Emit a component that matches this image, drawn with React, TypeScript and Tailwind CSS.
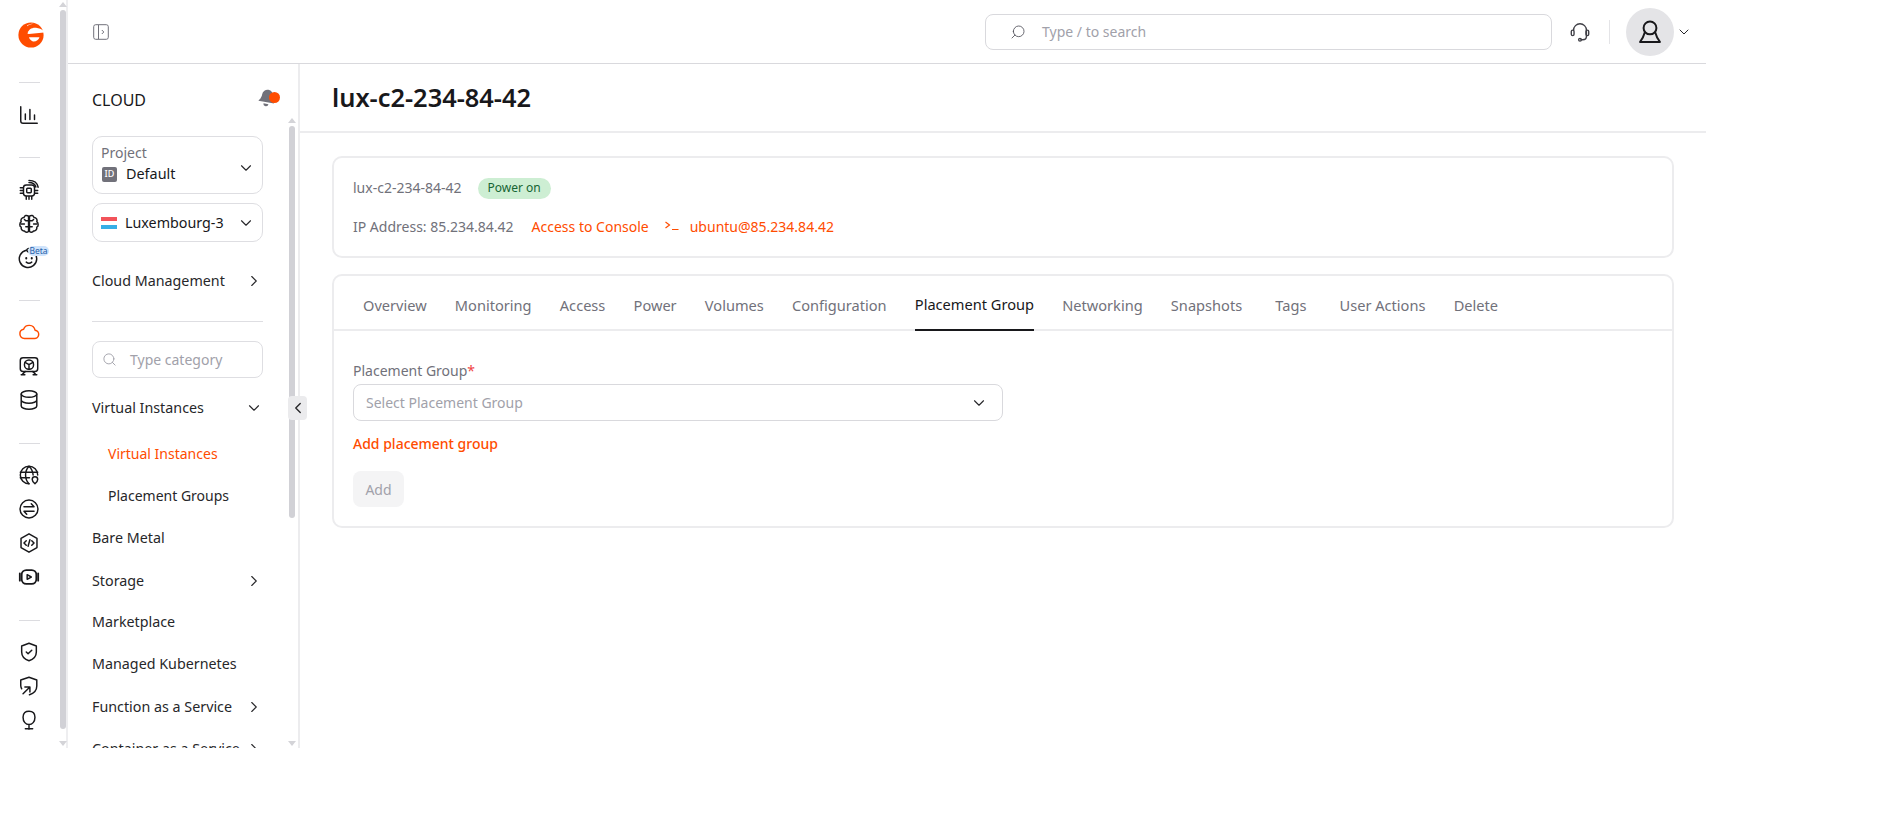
import React from 'react';
import { ChevronDown, ChevronRight, ChevronLeft, Search } from 'lucide-react';

const font = 'font-["Noto_Sans",sans-serif]';

function Ic({ children, className = 'text-[#18181b]' }: { children: React.ReactNode; className?: string }) {
  return (
    <svg viewBox="0 0 24 24" fill="none" stroke="currentColor" strokeWidth="1.6" strokeLinecap="round" strokeLinejoin="round" className={'w-[22px] h-[22px] ' + className}>
      {children}
    </svg>
  );
}

function Logo() {
  return (
    <svg viewBox="0 0 26 28" className="w-[26px] h-[28px]">
      <circle cx="13" cy="14" r="12.600" fill="#ff4c00" />
      <path d="M9.500 12.800C10 8.500 14 6.400 18 6.800c3 .3 6 1.700 8.500 3.700v1L11 13z" fill="#fff" />
      <path d="M11 16.200h10.500c-.8 2.800-3.500 4.500-6.500 4.200-2-.6-3.500-2.200-4-4.200z" fill="#fff" />
      <path d="M9 4.500c2-1.400 4.500-2 7-1.800-2.600.2-5 1-7 2.600z" fill="#fff" />
    </svg>
  );
}

function RailDivider({ className }: { className: string }) {
  return <div className={'w-[21px] h-px bg-[#dcdce0] ' + className} />;
}

function RailIcon({ children }: { children: React.ReactNode }) {
  return <div className="h-[34px] w-[56px] flex items-center justify-center">{children}</div>;
}

function Rail() {
  return (
    <div className="w-[68px] shrink-0 flex border-r-2 border-[#eeeef0]">
      <div className="w-[58px] shrink-0 flex flex-col items-center pt-[21px]">
        <div className="pl-[3px]"><Logo /></div>
        <RailDivider className="mt-[33px]" />
        <div className="mt-[15px]">
          <RailIcon>
            <Ic>
              <path d="M3 3v15.500c0 1.400 1 2.500 2.500 2.500H21" />
              <path d="M8 11v6M13 6v11M18 12v5" />
            </Ic>
          </RailIcon>
        </div>
        <RailDivider className="mt-[25px]" />
        <div className="mt-[15px]">
          <RailIcon>
            <Ic>
              <rect x="6" y="6.500" width="12" height="12" rx="3" />
              <rect x="9.500" y="10" width="5" height="5" rx="1" />
              <path d="M2.500 9.500h3M2.500 12.500h3M2.500 15.500h3M9 22v-3M12 22v-3M15 22v-3M18.500 12.500h3M18.500 15.500h3M12 3.800c3.500 0 6.500 1.700 7.500 5M12 1.500c5 0 9 2.500 10 7.500" />
            </Ic>
          </RailIcon>
          <RailIcon>
            <Ic>
              <path d="M11.500 3.500C9.500 2 7 2.500 6.500 5 4 5 2.500 7.500 3.500 9.500c-2 1.500-2 5 0 6-.5 2.500 1.500 4.500 3.500 4 1 2 4 2 4.500.5z" />
              <path d="M12.500 3.500C14.500 2 17 2.500 17.500 5c2.500 0 4 2.500 3 4.500 2 1.500 2 5 0 6 .5 2.500-1.500 4.500-3.500 4-1 2-4 2-4.500.5z" />
              <path d="M11.500 8.500H8.500L7 7M11.500 15H8.500M3.500 12H7M12.500 8.500h3L17 7M12.500 15h3M20.500 12H17" />
            </Ic>
          </RailIcon>
          <RailIcon>
            <div className="relative">
              <Ic>
                <path d="M17 5.500A9.500 9.500 0 1 1 9 3.500" />
                <path d="M11.500 1.500C9.500 2 9 4 10.500 5c1.500.8 3 0 2.500-1.500" />
                <path d="M9 12v.5M15 12v.5" strokeWidth="2.200" />
                <path d="M9 16.500c1.800 1.400 4.200 1.400 6 0" />
              </Ic>
              <span className="absolute left-[10px] top-[-1px] w-[21px] h-[10px] rounded-[5px] bg-[#cfe3fb] text-[8.500px] leading-[10px] text-center text-[#1f5fa8]">Beta</span>
            </div>
          </RailIcon>
        </div>
        <RailDivider className="mt-[25px]" />
        <div className="mt-[14px]">
          <RailIcon>
            <Ic className="text-[#ff4c00]">
              <path d="M17.500 19H7a5 5 0 0 1-.9-9.900 6.500 6.500 0 0 1 12.500 0.900 4.500 4.500 0 0 1-1.100 9z" />
            </Ic>
          </RailIcon>
          <RailIcon>
            <Ic>
              <rect x="2.500" y="3" width="19" height="15" rx="3" />
              <circle cx="12" cy="10.500" r="5" />
              <path d="M12 10.500v5M12 10.500 7.700 8M12 10.500 16.300 8M5 21c1-1.500 2-2.500 3-3M19 21c-1-1.500-2-2.500-3-3M3.500 21.500h4M16.500 21.500h4" />
            </Ic>
          </RailIcon>
          <RailIcon>
            <Ic>
              <ellipse cx="12" cy="5.500" rx="8.500" ry="3.500" />
              <path d="M3.500 5.500v13c0 1.900 3.800 3.500 8.500 3.500s8.500-1.600 8.500-3.500v-13M3.500 12c0 1.900 3.800 3.500 8.500 3.500s8.500-1.600 8.500-3.500" />
            </Ic>
          </RailIcon>
        </div>
        <RailDivider className="mt-[26px]" />
        <div className="mt-[14px]">
          <RailIcon>
            <Ic>
              <path d="M21.500 12a9.500 9.500 0 1 0-9.500 9.500" />
              <path d="M2.500 9h19M2.500 15h10M12 2.500c-5 5-5 14 0 19M12 2.500c3 3 4.300 6.500 4.500 9.500" />
              <path d="M18.500 21.500s-3-2.400-3-4.500a3 3 0 0 1 6 0c0 2.100-3 4.500-3 4.500z" />
            </Ic>
          </RailIcon>
          <RailIcon>
            <Ic>
              <circle cx="12" cy="12" r="9.800" />
              <path d="M6.500 9.500h11M14.500 6.200l3 3.300M17.500 14.500h-11M9.500 17.800l-3-3.300" />
            </Ic>
          </RailIcon>
          <RailIcon>
            <Ic>
              <path d="M12 2 20.700 7v10L12 22l-8.700-5V7z" />
              <path d="M9 9.500 6.500 12 9 14.500M15 9.500l2.500 2.500-2.500 2.500M13 8.500l-2 7" />
            </Ic>
          </RailIcon>
          <RailIcon>
            <Ic>
              <rect x="4" y="4.500" width="16" height="15" rx="5" strokeWidth="2" />
              <path d="M2 8v8M22 8v8" strokeWidth="2" />
              <path d="M10 9.500v5l4.500-2.500z" />
            </Ic>
          </RailIcon>
        </div>
        <RailDivider className="mt-[26px]" />
        <div className="mt-[14px]">
          <RailIcon>
            <Ic>
              <path d="M12 2.500 20 5.500v6.500c0 4.500-3.300 8-8 9.500-4.700-1.500-8-5-8-9.500V5.500z" />
              <path d="M9 12l2 2 4-4" />
            </Ic>
          </RailIcon>
          <RailIcon>
            <Ic>
              <path d="M4 15c-.6-1-1-2.300-1-3.500V5.500L12 2.500l8.500 3v6.500c0 4.500-3.300 8-8 9.500" />
              <path d="M5.500 20.500 13 13M7.500 13H13v5.500" />
            </Ic>
          </RailIcon>
          <RailIcon>
            <Ic>
              <path d="M12 2.500c3.700 0 6.500 1.500 6.500 6.500s-3 8-6.500 8-6.500-3-6.500-8 2.800-6.500 6.500-6.500zM12 17v5M8 21.500h8" />
            </Ic>
          </RailIcon>
        </div>
      </div>
      <ScrollBar thumbTop="mt-[3px]" thumbH="h-[719px]" className="w-[9px] h-[748px] pt-[2px]" />
    </div>
  );
}

function ScrollBar({ thumbTop, thumbH, className }: { thumbTop: string; thumbH: string; className: string }) {
  return (
    <div className={'shrink-0 flex flex-col items-center ' + className}>
      <div className="w-0 h-0 border-x-[4px] border-x-transparent border-b-[5px] border-b-[#d4d4d8]" />
      <div className={'w-[6px] rounded-full bg-[#d1d1d6] ' + thumbTop + ' ' + thumbH} />
      <div className="flex-1" />
      <div className="w-0 h-0 border-x-[4px] border-x-transparent border-t-[5px] border-t-[#d4d4d8] mb-[2px]" />
    </div>
  );
}

function Header() {
  return (
    <div className="h-[64px] shrink-0 border-b border-[#d9d9dd] flex items-center pl-[25px]">
      <svg viewBox="0 0 16 16" fill="none" stroke="#71717a" strokeWidth="1" className="w-[16px] h-[16px]">
        <rect x="0.700" y="0.700" width="14.600" height="14.600" rx="2" />
        <path d="M5.500 1v14M8.800 6l2 2-2 2" />
      </svg>
      <div className="ml-auto w-[567px] h-[36px] border border-[#d9d9dd] rounded-[8px] flex items-center pl-[24px] mr-[17px]">
        <Search className="w-[16px] h-[16px] text-[#52525b] -scale-x-100" strokeWidth={1.300} />
        <span className="ml-[16px] text-[14px] text-[#a1a1aa]">Type / to search</span>
      </div>
      <svg viewBox="0 0 24 24" fill="none" stroke="#3f3f46" strokeWidth="1.500" strokeLinecap="round" className="w-[22px] h-[22px]">
        <path d="M5 10a7 7 0 0 1 14 0v7c0 2-1.500 3.500-4 3.500h-2" />
        <rect x="2.500" y="10" width="3" height="6" rx="1.500" />
        <rect x="18.500" y="10" width="3" height="6" rx="1.500" />
        <circle cx="12" cy="20.500" r="1.500" />
      </svg>
      <div className="w-px h-[24px] bg-[#e4e4e7] ml-[18px] mr-[16px]" />
      <div className="w-[48px] h-[48px] rounded-full bg-[#e4e4e7] flex items-center justify-center">
        <svg viewBox="0 0 24 24" fill="none" stroke="#18181b" strokeWidth="1.700" strokeLinecap="round" strokeLinejoin="round" className="w-[28px] h-[28px]">
          <circle cx="12" cy="8.500" r="5.500" />
          <path d="M7.500 12.500C6.500 16 5.300 18.500 3.500 20.500h17c-1.800-2-3-4.500-4-8" />
        </svg>
      </div>
      <ChevronDown className="w-[16px] h-[16px] text-[#27272a] ml-[2px] mr-[14px]" strokeWidth={1.500} />
    </div>
  );
}

function NavRow({ label, icon, sub, active, nudge }: { label: string; icon?: 'right' | 'down'; sub?: boolean; active?: boolean; nudge?: boolean }) {
  return (
    <div className={'h-[42px] flex items-center justify-between ' + (nudge ? 'pt-[2px] ' : '') + (sub ? 'pl-[16px] text-[14px] ' : 'text-[14.300px] ') + (active ? 'text-[#ff4c00]' : 'text-[#27272a]')}>
      <span className="whitespace-nowrap">{label}</span>
      {icon === 'right' && <ChevronRight className="w-[18px] h-[18px] text-[#27272a]" strokeWidth={1.500} />}
      {icon === 'down' && <ChevronDown className="w-[18px] h-[18px] text-[#27272a]" strokeWidth={1.500} />}
    </div>
  );
}

function Sidebar() {
  return (
    <div className="relative w-[232px] shrink-0 border-r-2 border-[#ececee] flex flex-col h-[684px] overflow-visible">
      <div className="flex items-center justify-between h-[54px] pl-[24px] pr-[21px] pt-[18px]">
        <span className="text-[16px] text-[#18181b]">CLOUD</span>
        <div className="relative w-[20px] h-[20px] -mt-[4px]">
          <svg viewBox="0 0 24 24" className="w-[20px] h-[20px] rotate-[10deg]" fill="#71717a">
            <path d="M12 2a6.500 6.500 0 0 0-6.500 6.500c0 5-2.500 7-3 8.500h19c-.5-1.500-3-3.500-3-8.500A6.500 6.500 0 0 0 12 2zM9 19a3 3 0 0 0 6 0z" />
          </svg>
          <div className="absolute right-[-3px] top-[4px] w-[11px] h-[11px] rounded-full bg-[#ff4c00]" />
        </div>
      </div>
      <div className="flex flex-1 min-h-0">
        <div className="w-[219px] shrink-0 overflow-hidden pl-[24px] pt-[18px]">
          <div className="w-[171px]">
            <div className="h-[58px] border border-[#dedee2] rounded-[10px] pl-[8px] pr-[7px] pt-[7px] relative">
              <div className="text-[14px] leading-[18px] text-[#71717a]">Project</div>
              <div className="flex items-center mt-[4px] pl-[1px]">
                <span className="w-[15px] h-[15px] rounded-[2px] bg-[#71717a] text-white text-[9px] font-medium flex items-center justify-center">ID</span>
                <span className="ml-[9px] text-[14.400px] leading-[16px] text-[#18181b]">Default</span>
              </div>
              <ChevronDown className="absolute right-[7px] top-[22px] w-[18px] h-[18px] text-[#27272a]" strokeWidth={1.500} />
            </div>
            <div className="mt-[9px] h-[39px] border border-[#dedee2] rounded-[10px] flex items-center justify-between pl-[8px] pr-[7px]">
              <div className="flex items-center">
                <div className="w-[16px] flex flex-col">
                  <div className="h-[4px] bg-[#f2535a]" />
                  <div className="h-[4px] bg-white" />
                  <div className="h-[4px] bg-[#36aee6]" />
                </div>
                <span className="ml-[8px] text-[14.300px] text-[#18181b]">Luxembourg-3</span>
              </div>
              <ChevronDown className="w-[18px] h-[18px] text-[#27272a]" strokeWidth={1.500} />
            </div>
            <div className="mt-[18px]"><NavRow label="Cloud Management" icon="right" /></div>
            <div className="mt-[19px] h-px bg-[#dedee2]" />
            <div className="mt-[19px] h-[37px] border border-[#dedee2] rounded-[8px] flex items-center pl-[9px]">
              <Search className="w-[15px] h-[15px] text-[#a1a1aa]" strokeWidth={1.500} />
              <span className="ml-[13px] text-[14px] text-[#a1a1aa]">Type category</span>
            </div>
            <div className="mt-[9px]"><NavRow label="Virtual Instances" icon="down" /></div>
            <div className="mt-[3px]">
              <NavRow label="Virtual Instances" sub active />
              <NavRow label="Placement Groups" sub />
            </div>
            <div className="mt-[1px]">
              <NavRow label="Bare Metal" />
            </div>
            <NavRow label="Storage" icon="right" nudge />
            <NavRow label="Marketplace" />
            <NavRow label="Managed Kubernetes" />
            <NavRow label="Function as a Service" icon="right" nudge />
            <NavRow label="Container as a Service" icon="right" nudge />
          </div>
        </div>
        <ScrollBar thumbTop="mt-[3px]" thumbH="h-[392px]" className="w-[9px]" />
      </div>
      <div className="absolute right-[-9px] top-[332px] w-[19px] h-[24px] rounded-[4px] bg-[#ebebed] flex items-center justify-center">
        <ChevronLeft className="w-[18px] h-[18px] text-[#27272a]" strokeWidth={1.800} />
      </div>
    </div>
  );
}

function Main() {
  const tabs = ['Overview', 'Monitoring', 'Access', 'Power', 'Volumes', 'Configuration', 'Placement Group', 'Networking', 'Snapshots', 'Tags', 'User Actions', 'Delete'];
  return (
    <div className="flex-1 min-w-0">
      <div className="h-[69px] border-b-2 border-[#ececee] pl-[32px] flex items-center">
        <h1 className="text-[25.400px] font-semibold text-[#18181b]">lux-c2-234-84-42</h1>
      </div>
      <div className="pl-[32px] pr-[32px] pt-[23px]">
        <div className="h-[102px] border-2 border-[#ececee] rounded-[10px] pl-[19px] pt-[18px]">
          <div className="flex items-center h-[22px]">
            <span className="text-[14px] text-[#71717a]">lux-c2-234-84-42</span>
            <span className="ml-[16px] mt-[2px] h-[21px] px-[10px] rounded-full bg-[#cdeed3] text-[12px] text-[#166534] flex items-center">Power on</span>
          </div>
          <div className="flex items-center mt-[17px] h-[22px] text-[14px]">
            <span className="text-[#71717a]">IP Address: 85.234.84.42</span>
            <span className="ml-[18px] text-[#ff4c00]">Access to Console</span>
            <svg viewBox="0 0 14 10" fill="none" stroke="#ff4c00" strokeWidth="1.200" className="ml-[16px] w-[14px] h-[10px]">
              <path d="M0.500 1 4.500 4 0.500 7M7 8.500h6.500" />
            </svg>
            <span className="ml-[11px] text-[#ff4c00]">ubuntu@85.234.84.42</span>
          </div>
        </div>
        <div className="mt-[16px] h-[254px] border-2 border-[#ececee] rounded-[10px]">
          <div className="h-[55px] border-b-2 border-[#ececee] flex gap-[28.200px] pl-[29px]">
            {tabs.map(t => (
              <div key={t} className={'flex items-center justify-center h-[55px] pt-[4px] text-[14.600px] whitespace-nowrap ' + (t === 'Tags' ? 'w-[41px] ' : '') + (t === 'Placement Group' ? 'text-[#18181b] border-b-2 border-[#18181b]' : 'text-[#71717a]')}>
                {t}
              </div>
            ))}
          </div>
          <div className="pl-[19px] pt-[30px]">
            <div className="text-[14px] leading-[20px] text-[#71717a]">Placement Group<span className="text-[#ef4444]">*</span></div>
            <div className="mt-[3px] w-[650px] h-[37px] border border-[#d9d9dd] rounded-[8px] flex items-center justify-between pl-[12px] pr-[14px]">
              <span className="text-[14px] text-[#a1a1aa]">Select Placement Group</span>
              <ChevronDown className="w-[18px] h-[18px] text-[#27272a]" strokeWidth={1.500} />
            </div>
            <div className="mt-[13px] text-[14px] leading-[20px] font-medium text-[#ff4c00]">Add placement group</div>
            <div className="mt-[17px] w-[51px] h-[36px] rounded-[8px] bg-[#f4f4f5] text-[14px] text-[#a1a1aa] flex items-center justify-center">Add</div>
          </div>
        </div>
      </div>
    </div>
  );
}

export default function App() {
  return (
    <div className={'bg-white min-h-[831px] ' + font}>
      <div className="flex w-[1706px] h-[748px] overflow-hidden">
        <Rail />
        <div className="flex-1 min-w-0 flex flex-col">
          <Header />
          <div className="flex flex-1 min-h-0">
            <Sidebar />
            <Main />
          </div>
        </div>
      </div>
    </div>
  );
}
